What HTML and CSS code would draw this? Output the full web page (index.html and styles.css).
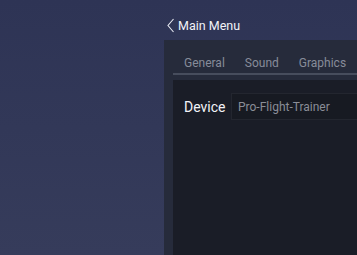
FILE: index.html
```html
<!DOCTYPE html>
<html lang="en">
<head>
    <meta charset="UTF-8">
    <meta name="viewport" content="width=device-width, initial-scale=1.0">
    <title>Settings</title>
    <link rel="stylesheet" href="styles.css">
</head>
<body>
    <div class="main">
        <div class="header">
            <a class="back" href="#">
                <svg width="8" height="15" viewBox="0 0 8 15"><path d="M6.5 1 L1 7.5 L6.5 14" fill="none" stroke="#e8eaf2" stroke-width="1.1"/></svg>
                Main Menu
            </a>
        </div>
        <div class="panel">
            <ul class="tabs">
                <li>General</li>
                <li>Sound</li>
                <li>Graphics</li>
            </ul>
            <div class="content">
                <div class="row">
                    <label>Device</label>
                    <div class="field">Pro-Flight-Trainer</div>
                </div>
            </div>
        </div>
    </div>
</body>
</html>
```
FILE: styles.css
```css
*{
    margin: 0;
    padding: 0;
    box-sizing: border-box;
}
body{
    background: linear-gradient(#2e3455, #363c5b);
    font-family: Roboto, "Liberation Sans", sans-serif;
    height: 255px;
    overflow: hidden;
}
.main{
    margin-left: 164px;
    height: 100%;
    display: flex;
    flex-direction: column;
}
.header{
    height: 40px;
    padding: 18px 0 0 3px;
}
.back{
    display: flex;
    align-items: center;
    gap: 3px;
    color: #f2f3f8;
    text-decoration: none;
    font-size: 12.5px;
}
.panel{
    flex: 1;
    background-color: #262b3b;
    padding-left: 9px;
    display: flex;
    flex-direction: column;
}
.tabs{
    display: flex;
    list-style-type: none;
    gap: 20px;
    height: 35px;
    align-items: flex-end;
    padding: 0 0 3px 11px;
    border-bottom: 2px solid #474d5d;
    color: #878c9a;
    font-size: 12px;
}
.content{
    flex: 1;
    margin-top: 5px;
    background-color: #1a1d27;
    padding: 13px 0 0 11px;
}
.row{
    display: flex;
    align-items: center;
}
.row label{
    width: 47px;
    color: #f2f3f8;
    font-size: 14px;
}
.field{
    flex: 1;
    height: 27px;
    display: flex;
    align-items: center;
    padding-left: 6px;
    background-color: #171a22;
    border: 1px solid #23262f;
    border-right: none;
    color: #8a8d97;
    font-size: 12px;
}
```
